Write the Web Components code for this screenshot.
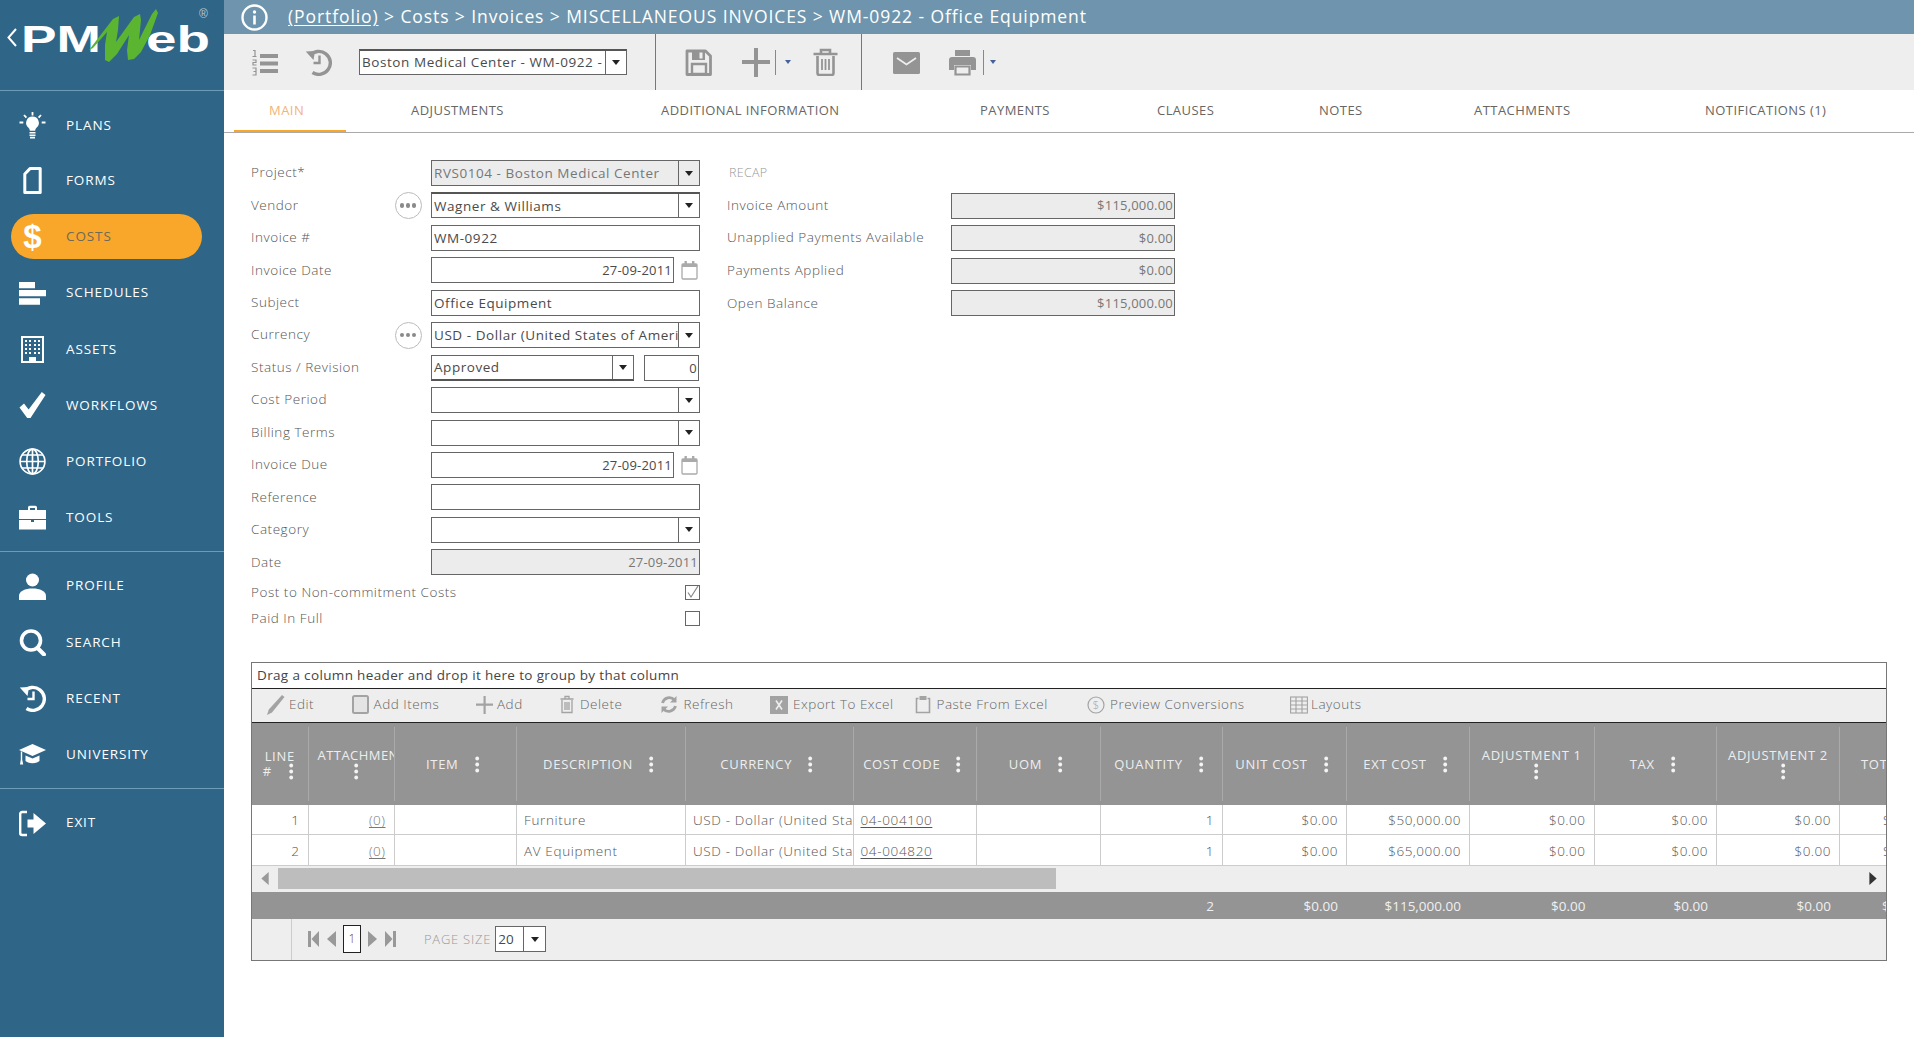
<!DOCTYPE html>
<html><head><meta charset="utf-8"><title>PMWeb</title>
<style>
html,body{margin:0;padding:0;height:100%;background:#fff;overflow:hidden}
body{font-family:"Open Sans","Liberation Sans",sans-serif;color:#555}
</style></head><body>
<pm-app></pm-app>
<script>
const FONT='"Open Sans","Liberation Sans",sans-serif';
const I={
bulb:'<g stroke="currentColor" stroke-width="1.8" fill="none"><path d="M13.5 0v3.5M5 3l2.4 2.6M22 3l-2.4 2.6M.5 10.5h3.8M22.7 10.5h3.8"/></g><path fill="currentColor" d="M13.5 4.5a6.3 6.3 0 0 1 4 11.2c-.9.8-1.2 1.8-1.3 3h-5.4c-.1-1.2-.4-2.2-1.3-3a6.3 6.3 0 0 1 4-11.2z"/><path fill="currentColor" d="M10.5 20h6v1.6h-6zM10.5 22.4h6V24h-6zM11 24.8h5V26.6h-5z"/>',
forms:'<path fill="none" stroke="currentColor" stroke-width="3" stroke-linejoin="round" d="M11 1.6h10.2v23.8H5.8V7z"/>',
sched:'<path fill="currentColor" d="M0 2h16v6.2H0zM0 10h27v6.2H0zM0 18.2h21v6.6H0z"/>',
asset:'<path fill="none" stroke="currentColor" stroke-width="2" d="M3 1h21v25H3z"/><path fill="currentColor" d="M6 4h2v2H6zM10 4h2v2h-2zM15 4h2v2h-2zM19 4h2v2h-2zM6 8h2v2H6zM10 8h2v2h-2zM15 8h2v2h-2zM19 8h2v2h-2zM6 12h2v2H6zM10 12h2v2h-2zM15 12h2v2h-2zM19 12h2v2h-2zM6 16h2v2H6zM10 16h2v2h-2zM15 16h2v2h-2zM19 16h2v2h-2zM10 21h7v5h-7z"/>',
check:'<path fill="currentColor" d="M.5 15.5 5 11.5l4.6 6L22.8 0 26.5 3 11.5 26H8.2z"/>',
globe:'<g fill="none" stroke="currentColor" stroke-width="1.7"><circle cx="13.5" cy="13.5" r="12.4"/><ellipse cx="13.5" cy="13.5" rx="5.8" ry="12.4"/><path d="M13.5 1v25M1.2 13.5h24.6M3 7h21M3 20h21"/></g>',
tools:'<path fill="currentColor" d="M9 3.5c0-1 .8-1.7 1.700-1.700h5.600c.9 0 1.700.7 1.700 1.700V6h-2V4h-5v2H9zM0 6h27v9H0zM0 16h12v2h3v-2h12v9.500H0z"/>',
person:'<circle cx="13.500" cy="7" r="6.500" fill="currentColor"/><path fill="currentColor" d="M0 27v-4c0-5 6-7.500 13.500-7.500S27 18 27 23v4z"/>',
search:'<circle cx="12" cy="11.500" r="9.500" fill="none" stroke="currentColor" stroke-width="3.600"/><path stroke="currentColor" stroke-width="4" stroke-linecap="round" d="M18.500 19l6.500 6.500"/>',
recent:'<path fill="none" stroke="currentColor" stroke-width="3.400" d="M5 6.500A11.500 11.500 0 1 1 7.500 23.500"/><path fill="currentColor" d="M.8 2.500 10 2l-1.500 9z"/><path fill="none" stroke="currentColor" stroke-width="2.400" d="M14.500 6.500v7.500H8.500"/>',
univ:'<path fill="currentColor" d="M13.500 3 27 9 13.500 15 0 9z"/><path fill="currentColor" d="M6.500 14.500v5.500c4 3 10 3 14 0v-5.500l-7 3zM1.800 10.500h1.400v8l1 5H1l.8-5z"/>',
exit:'<path fill="none" stroke="currentColor" stroke-width="2.400" d="M8 2H3.200C2 2 1.200 2.800 1.200 4v19c0 1.200.8 2 2 2H8"/><path fill="currentColor" d="M8.500 9.500h6V3L27 13.500 14.500 24v-6.500h-6z"/>',
list:'<path fill="currentColor" d="M10 5h18v4H10zM10 12.500h18v4H10zM10 20h18v4H10z"/><path fill="none" stroke="currentColor" stroke-width="1.200" d="M3 1.500h2v6M2.500 7.500h4M2.500 11h3.500v2.500H3v2.500h3.500M2.500 19h3.500v7h-3.500M3.500 22.500h2.500"/>',
save:'<path fill="none" stroke="currentColor" stroke-width="2.800" stroke-linejoin="round" d="M2 2h18.500L25.500 7v18.500H2z"/><path fill="none" stroke="currentColor" stroke-width="2.400" d="M7 15h14v10H7z"/><path fill="currentColor" d="M7 2h13v9H7z"/><path fill="#eee" d="M14.500 3.500h3v6h-3z"/>',
plus:'<path fill="currentColor" d="M12 0h4v12h12v4H16v13h-4V16H0v-4h12z"/>',
trash:'<g fill="none" stroke="currentColor" stroke-width="2.600"><path d="M4.500 8v17a2 2 0 0 0 2 2h12a2 2 0 0 0 2-2V8M.5 6h24M8 5.500V2h9v3.500"/><path stroke-width="1.800" d="M9 11v11M12.500 11v11M16 11v11"/></g>',
mail:'<rect y="3" width="27" height="22" rx="1.500" fill="currentColor"/><path fill="none" stroke="#eee" stroke-width="1.800" d="M4 9l9.500 6.500L23 9"/>',
print:'<path fill="currentColor" d="M6 1h15v6H6zM3 8h21a3 3 0 0 1 3 3v10h-5v-5H5v5H0V11a3 3 0 0 1 3-3z"/><path fill="none" stroke="currentColor" stroke-width="2.200" d="M6.500 17.500h14v8h-14z"/>',
cal:'<g fill="none" stroke="currentColor" stroke-width="1.300"><rect x="1" y="4" width="15" height="15" rx="1"/></g><path fill="currentColor" d="M1 4h15v3H1zM3.500 1h2.400v4H3.500zM11 1h2.400v4H11z"/>',
edit:'<path fill="currentColor" d="M16 1l2.500 2L6 18.500 1 21l1.800-5.500z"/>',
box:'<rect x="1" y="1" width="15" height="17" rx="1.500" fill="#e4e4e4" stroke="currentColor" stroke-width="2"/>',
gplus:'<path fill="currentColor" d="M7.500 0h2.200v7.500H17v2.200H9.700V18H7.500V9.700H0V7.500h7.500z"/>',
gtrash:'<g fill="none" stroke="currentColor" stroke-width="1.300"><path d="M3 5v12.500h10V5M1.500 4h13M6 3.500V1.500h4v2"/><path d="M6 7v8M8 7v8M10 7v8"/></g>',
refresh:'<g fill="none" stroke="currentColor" stroke-width="2.800"><path d="M2.500 8a7 7 0 0 1 12-3"/><path d="M15.500 11a7 7 0 0 1-12 3"/></g><path fill="currentColor" d="M16.500 1v6.500h-6.500zM1.500 18v-6.500h6.500z"/>',
excel:'<path fill="currentColor" d="M0 0h18v18H0z"/><path stroke="#eee" stroke-width="1.600" d="M6 4.500l6 9M12 4.500l-6 9"/>',
clip:'<path fill="none" stroke="currentColor" stroke-width="1.600" d="M3.500 3.500H1.500v14h13v-14h-2"/><path fill="currentColor" d="M4.500 1h7v4h-7z"/>',
dollar:'<circle cx="9" cy="9" r="8" fill="none" stroke="currentColor" stroke-width="1.200"/>',
layout:'<g fill="none" stroke="currentColor" stroke-width="1.100"><rect x=".6" y="1" width="16.800" height="16"/><path d="M.6 5h16.800M.6 9h16.800M.6 13h16.800M6 1v16M12 1v16"/></g>',
first:'<path fill="currentColor" d="M0 0h3v16H0zM11 0v16L3.500 8z"/>',
prev:'<path fill="currentColor" d="M9 0v16L0 8z"/>',
next:'<path fill="currentColor" d="M0 0v16l9-8z"/>',
last:'<path fill="currentColor" d="M0 0l7.500 8L0 16zM8 0h3v16H8z"/>',
dots:'<g fill="currentColor"><circle cx="2.200" cy="2.500" r="1.900"/><circle cx="2.200" cy="8.500" r="1.900"/><circle cx="2.200" cy="14.500" r="1.900"/></g>'
};
function svg(n,w,h,vb){return `<svg width="${w}" height="${h}" viewBox="${vb||`0 0 ${w} ${h}`}" style="display:block;flex:none" aria-hidden="true">${I[n]}</svg>`}
class Base extends HTMLElement{
  constructor(){super();this.attachShadow({mode:'open'})}
  connectedCallback(){this.shadowRoot.innerHTML='<style>:host{box-sizing:border-box}*{box-sizing:border-box}</style>'+this.render()}
  a(n,d=''){return this.hasAttribute(n)?this.getAttribute(n):d}
}

class PmNav extends Base{render(){const on=this.hasAttribute('active');
return `<style>:host{display:block;height:${this.a('h','56.2')}px;padding:${this.hasAttribute('h')?'4.8':'5.6'}px 22px 0 11px}
.p{height:45px;border-radius:23px;display:flex;align-items:center;padding-left:8px;gap:20px;color:#fff;font:500 13.5px/1 ${FONT};letter-spacing:.9px;${on?'background:#f9a72b;':''}}
.i{width:27px;height:27px;display:flex;align-items:center;justify-content:center;font:700 33px/1 "Liberation Sans",sans-serif;letter-spacing:0}
.t{${on?'color:#6d6a58;':''}}</style>
<div class="p"><span class="i"><slot name="icon"></slot></span><span class="t"><slot></slot></span></div>`}}
class PmIcon extends Base{render(){const n=this.a('name'),w=+this.a('w',27),h=+this.a('h',27);
return `<style>:host{display:block;flex:none;color:${this.a('color','inherit')}}</style>${svg(n,w,h,this.a('vb','0 0 27 27'))}`}}

class PmLogo extends Base{render(){return `<style>:host{display:block;height:90px}svg{display:block}</style>
<svg width="224" height="90" viewBox="0 0 224 90">
<path d="M16 29 8.500 37.500l7.500 8.500" fill="none" stroke="#fff" stroke-width="2"/>
<text x="21" y="52" font-family="Liberation Sans" font-weight="700" font-size="36" fill="#fff" textLength="80" lengthAdjust="spacingAndGlyphs">PM</text>
<text x="146" y="52" font-family="Liberation Sans" font-weight="700" font-size="36" fill="#fff" textLength="64" lengthAdjust="spacingAndGlyphs">eb</text>
<text x="199" y="18" font-family="Liberation Sans" font-size="12" fill="#b9c9d4">®</text>
<path fill="#5cb531" d="M89 50L113 19L119 16L118 30L116 42L134 17L140 14L141 20L139 40L152 14L156 9L158 13L150 35L141 52L134 59L128 60L127 50L129 35L117 54L109 62L105 60L105 45L107 32L93 48z"/>
</svg>`}}

class PmSidebar extends Base{render(){return `<style>:host{display:block;width:224px;flex:none;background:#2f6587;height:100%}
.s{height:1px;background:#6e9bb8}.g1{height:460px;padding-top:7px}.g2{padding-top:6px;height:236px}.g3{padding-top:6px}
</style><pm-logo></pm-logo><div class="s"></div><div class="g1"><slot name="a"></slot></div><div class="s"></div><div class="g2"><slot name="b"></slot></div><div class="s"></div><div class="g3"><slot name="c"></slot></div>`}}

class PmTop extends Base{render(){return `<style>:host{display:flex;align-items:center;height:34px;background:#6e95ad;color:#fff;padding-left:17px;gap:20px;font:400 17.5px/1 ${FONT};letter-spacing:.91px;white-space:nowrap}
u{text-underline-offset:2px}svg{display:block}</style>
<svg width="27" height="27" viewBox="0 0 27 27"><circle cx="13.500" cy="13.500" r="12" fill="none" stroke="#fff" stroke-width="2.400"/><circle cx="13.500" cy="8" r="1.700" fill="#fff"/><path d="M12.200 11.500h2.600v9h-2.600z" fill="#fff"/></svg>
<span><u>(Portfolio)</u> &gt; Costs &gt; Invoices &gt; MISCELLANEOUS INVOICES &gt; WM-0922 - Office Equipment</span>`}}

class PmSelect extends Base{render(){const d=this.hasAttribute('disabled');const aw=this.a('aw','21');
return `<style>:host{display:block;height:26px;width:100%}
.b{height:100%;display:flex;border:1px solid #666;${this.hasAttribute('heavy')?'border-top:2px solid #555;':''}${this.hasAttribute('heavyb')?'border-bottom:2px solid #555;':''}background:${d?'#ececec':'#fff'};font:400 ${this.a('fs','13.5')}px/1 ${FONT};color:${d?'#777':'#4a4a4a'};letter-spacing:${this.a('ls','.55px')}}
.v{flex:1;min-width:0;overflow:hidden;white-space:nowrap;padding:1px 0 0 2px;display:flex;align-items:center}
.a{width:${aw}px;flex:none;border-left:1px solid #666;display:flex;align-items:center;justify-content:center}
.a i{width:0;height:0;border:4px solid transparent;border-top:5px solid #222;border-bottom:0;display:block}</style>
<div class="b"><span class="v"><slot></slot></span><span class="a"><i></i></span></div>`}}
class PmInput extends Base{render(){const d=this.hasAttribute('disabled'),r=this.hasAttribute('right');
return `<style>:host{display:block;height:26px;width:100%;flex:1 1 auto;min-width:0}
.b{height:100%;border:1px solid #666;background:${d?'#ececec':'#fff'};color:${d?'#777':'#4a4a4a'};font:400 ${r?'13px':'13.5px'}/1 ${FONT};letter-spacing:${r?'.2px':'.55px'};display:flex;align-items:center;justify-content:${r?'flex-end':'flex-start'};padding:${d?0:1}px ${r?'1px':'2px'} 0;white-space:nowrap;overflow:hidden}</style><div class="b"><slot></slot></div>`}}
class PmField extends Base{render(){const h=this.a('h','32.45');
return `<style>:host{display:grid;grid-template-columns:143.500px 27px 9.500px 269px;align-items:center;height:${h}px}
.l{font:300 13.5px/1 ${FONT};color:#555;letter-spacing:.54px;white-space:nowrap}
.m{width:27px;height:27px;border:1.500px solid #bbb;border-radius:50%;display:flex;align-items:center;justify-content:center;gap:1.500px;grid-column:2}
.m i{width:4.500px;height:4.500px;border-radius:50%;background:#8a8a8a}
.c{grid-column:4;display:flex;align-items:center;min-width:0}</style><span class="l" style="${this.hasAttribute('wide')?'grid-column:1/3':''}">${this.a('label')}</span>${this.hasAttribute('more')?'<span class="m"><i></i><i></i><i></i></span>':''}<div class="c"><slot></slot></div>`}}
class PmDate extends Base{render(){return `<style>:host{display:flex;align-items:center;width:100%}.w{width:243px;flex:none}.i{margin-left:7px;color:#aaa}</style>
<pm-input class="w" right>${this.a('value')}</pm-input><span class="i">${svg('cal',17,20)}</span>`}}
class PmCheck extends Base{render(){return `<style>:host{display:flex;justify-content:flex-end;width:100%}b{width:15px;height:15px;border:1px solid #666;display:block}svg{display:block}</style><b>${this.hasAttribute('checked')?'<svg width="13" height="13" viewBox="0 0 13 13"><path d="M2 6.500l3 4.500 7-11" fill="none" stroke="#888" stroke-width="1.200"/></svg>':''}</b>`}}
class PmRecap extends Base{render(){return `<style>:host{display:grid;grid-template-columns:224px 224px;align-items:center;height:32.6px}
.l{font:300 13.5px/1 ${FONT};color:#555;letter-spacing:.54px;white-space:nowrap}</style><span class="l">${this.a('label')}</span><pm-input disabled right>${this.a('value')}</pm-input>`}}

class PmTabs extends Base{render(){
const t=[['ADJUSTMENTS',250],['ADDITIONAL INFORMATION',319],['PAYMENTS',177],['CLAUSES',162],['NOTES',155],['ATTACHMENTS',231],['NOTIFICATIONS (1)',180]];
return `<style>:host{display:block;height:43px;border-bottom:1px solid #aaa;padding-left:10px}
.r{display:flex;height:42px;font:400 13px/1 ${FONT};letter-spacing:.45px;color:#666;white-space:nowrap}
.t{display:flex;align-items:center;flex:none;padding-bottom:1px}.m{color:#f4b27a;width:112px;padding-left:35px;border-bottom:2.500px solid #f9a72b;padding-top:1px;padding-bottom:0;margin-right:65px}</style>
<div class="r"><span class="t m">MAIN</span>${t.map(([x,w])=>`<span class="t" style="width:${w}px">${x}</span>`).join('')}</div>`}}

class PmTool extends Base{render(){return `<style>:host{display:flex;align-items:center;flex:none;gap:${this.a('gap','5')}px;width:${this.a('w','auto')}${this.hasAttribute('w')?'px':''};color:#999;font:300 13.5px/1 ${FONT};letter-spacing:.5px;white-space:nowrap;margin-top:-1px}.t{color:#666}</style>
<span style="display:flex;color:#a3a3a3"><slot name="i"></slot></span><span class="t"><slot></slot></span>`}}

class PmToolbar extends Base{render(){const sp=w=>`<span style="width:${w}px;flex:none"></span>`;return `<style>:host{display:flex;align-items:center;height:56px;background:#eeeeee;padding-left:26px;color:#949494}
.d{width:1px;height:56px;background:#777;flex:none}.s{width:1px;height:25px;background:#888;flex:none}
.tri{width:0;height:0;border:3.500px solid transparent;border-top:4.500px solid #44619c;border-bottom:0;flex:none}
pm-select{width:268px;flex:none;margin-left:27px;margin-right:28px}</style>
${svg('list',28,27)}${sp(27)}${svg('recent',27,27)}
<pm-select ls=".57px" heavy>Boston Medical Center - WM-0922 -</pm-select>
<span class="d"></span>${sp(29)}${svg('save',27,27)}${sp(30)}${svg('plus',28,29)}${sp(5)}<span class="s"></span>${sp(8.5)}<span class="tri"></span>${sp(22.5)}${svg('trash',25,28)}${sp(23)}<span class="d"></span>${sp(30.5)}${svg('mail',27,27)}${sp(29)}${svg('print',27,27)}${sp(7)}<span class="s"></span>${sp(6.5)}<span class="tri"></span>`}}

const COLS=[55.5,86,122.5,169,167.5,123.5,124,122,124,123,124.5,122.5,123,47.5];
const TPL=COLS.map(c=>c+'px').join(' ');
const HEAD=[['LINE #','line'],['ATTACHMENTS','below'],['ITEM'],['DESCRIPTION'],['CURRENCY'],['COST CODE'],['UOM'],['QUANTITY'],['UNIT COST'],['EXT COST'],['ADJUSTMENT 1','below'],['TAX'],['ADJUSTMENT 2','below'],['TOTAL','clip']];
const ROWS=[['1','(0)','','Furniture','USD - Dollar (United States of America)','04-004100','','1','$0.00','$50,000.00','$0.00','$0.00','$0.00','$50,000.00'],
['2','(0)','','AV Equipment','USD - Dollar (United States of America)','04-004820','','1','$0.00','$65,000.00','$0.00','$0.00','$0.00','$65,000.00']];
const ALIGN=['r','r','l','l','l','l','l','r','r','r','r','r','r','r'];
class PmGrid extends Base{render(){
const dots=svg('dots',5,17);
const head=HEAD.map(([t,k],i)=>{
 if(k==='line')return `<div class="h c2"><span>LINE</span><span class="ln"><span>#</span>${dots}</span></div>`;
 if(k==='below')return `<div class="h c2 ${i==1?'cl':'ad'}"><span class="nw">${t}</span>${dots}</div>`;
 if(k==='clip')return `<div class="h st"><span class="nw">${t}</span></div>`;
 return `<div class="h sg"><span class="nw">${t}</span>${dots}</div>`;}).join('');
const rows=ROWS.map(r=>`<div class="row d">${r.map((v,i)=>{
 let inner=v; if(i==1)inner=`<u class="ul">${v}</u>`; if(i==5)inner=`<u>${v}</u>`;
 return `<div class="td ${ALIGN[i]} ${i==13?'ovl':''}"><span>${inner}</span></div>`}).join('')}</div>`).join('');
const foot=['','','','','','','','2','$0.00','$115,000.00','$0.00','$0.00','$0.00','$115,000.00'].map((v,i)=>`<div class="td r ${i==13?'ovl':''}"><span>${v}</span></div>`).join('');
return `<style>:host{display:block;border:1px solid #777;width:1636px;font:300 13.5px/1 ${FONT};color:#555;letter-spacing:.5px;overflow:hidden}
.grp{height:26px;display:flex;align-items:center;padding:1.500px 0 0 5px;border-bottom:1px solid #222;color:#444;font-weight:400;letter-spacing:.35px;background:#fff}
.tb{height:34px;display:flex;align-items:center;background:#eee;border-bottom:1px solid #222;padding-left:14px}
.row{display:grid;grid-template-columns:${TPL};white-space:nowrap}
.head{height:82px;background:#949494;color:#eee;font-weight:500;font-size:13px;letter-spacing:.7px}
.h{display:flex;align-items:center;justify-content:center;gap:15px;border-left:1px solid #aaa;margin:4px 0;overflow:hidden;padding:2px 2px 0;min-width:0}
.sg{gap:16px;padding-right:7px}
.h:first-child{border-left:0}.h svg{color:#f4f4f4}
.c2{flex-direction:column;gap:1px;align-items:center}.c2 span{display:block}.cl{align-items:flex-start;padding-left:9px}.cl svg{margin-left:36px}.cl .nw{letter-spacing:.45px}.ad svg{margin-left:10px}
.ln{display:flex!important;gap:17px;align-items:center;margin-left:-3px;margin-top:-1px}
.st{justify-content:flex-start;padding-left:21px}
.d{height:30.500px;background:#fff}
.td{display:flex;align-items:center;padding:3px 8px 0;border-left:1px solid #ccc;border-bottom:1px solid #ccc;overflow:hidden;min-width:0}
.td:first-child{border-left:0}
.td.r{justify-content:flex-end}.td.l{padding-left:7px;padding-right:0;letter-spacing:.65px}
.ovl{justify-content:flex-start!important;padding-left:43px!important;padding-right:0!important}
.d u{text-underline-offset:2px}.ul{color:#777}
.sb{height:26px;background:#eee;display:flex;align-items:center;padding:0 9px}
.tl{width:17px;color:#999}.th{height:21px;width:778px;background:#bdbdbd}
.sp{flex:1}
.ft{height:27px;background:#949494;color:#f0f0f0;font-weight:500;letter-spacing:0}
.ft .td{border:0;padding-top:2px}
.pg{height:41px;background:#eee;display:flex;align-items:center}
.pc{width:40px;height:100%;border-right:1px solid #ccc;flex:none}
.pn{display:flex;align-items:center;color:#999}
.pi{width:18px;height:28px;border:1px solid #222;background:#fff;margin:0 7px;display:flex;align-items:center;justify-content:center;color:#7a3a3a;font-size:12px;letter-spacing:0}
.ps{color:#999;margin-left:28px;font-size:13px;letter-spacing:.75px;margin-right:4px}
pm-select{width:51px;flex:none}
</style>
<div class="grp">Drag a column header and drop it here to group by that column</div>
<div class="tb">
<pm-tool w="85.6" gap="4"><span slot="i">${svg('edit',19,21)}</span>Edit</pm-tool>
<pm-tool w="124.4"><span slot="i">${svg('box',17,19)}</span>Add Items</pm-tool>
<pm-tool w="83" gap="4"><span slot="i">${svg('gplus',17,18)}</span>Add</pm-tool>
<pm-tool w="101.5"><span slot="i">${svg('gtrash',16,19)}</span>Delete</pm-tool>
<pm-tool w="109.5"><span slot="i">${svg('refresh',18,19)}</span>Refresh</pm-tool>
<pm-tool w="145.500"><span slot="i">${svg('excel',18,18)}</span>Export To Excel</pm-tool>
<pm-tool w="171.500"><span slot="i">${svg('clip',16,19)}</span>Paste From Excel</pm-tool>
<pm-tool w="203"><span slot="i"><span style="position:relative;display:block;width:18px;height:18px">${svg('dollar',18,18)}<span style="position:absolute;left:0;top:0;width:18px;text-align:center;font-size:11px;line-height:18px;letter-spacing:0">$</span></span></span>Preview Conversions</pm-tool>
<pm-tool gap="3"><span slot="i">${svg('layout',18,18)}</span>Layouts</pm-tool>
</div>
<div class="row head">${head}</div>
${rows}
<div class="sb"><span class="tl">${svg('prev',8,13,'0 0 9 16')}</span><span class="th"></span><span class="sp"></span><span style="color:#333">${svg('next',8,13,'0 0 9 16')}</span></div>
<div class="row ft">${foot}</div>
<div class="pg"><span class="pc"></span><span class="pn" style="margin-left:16px">${svg('first',11,16)}<span style="width:8px"></span>${svg('prev',9,16)}<span class="pi">1</span>${svg('next',9,16)}<span style="width:8px"></span>${svg('last',11,16)}</span>
<span class="ps">PAGE SIZE</span><pm-select aw="22" ls="0">20</pm-select></div>`}}

const reg={'pm-nav':PmNav,'pm-icon':PmIcon,'pm-logo':PmLogo,'pm-sidebar':PmSidebar,'pm-top':PmTop,'pm-select':PmSelect,'pm-input':PmInput,'pm-field':PmField,'pm-date':PmDate,'pm-check':PmCheck,'pm-recap':PmRecap,'pm-tabs':PmTabs,'pm-tool':PmTool,'pm-toolbar':PmToolbar,'pm-grid':PmGrid};

class PmApp extends Base{render(){
const nav=(s,n,t,a,h)=>`<pm-nav slot="${s}" ${a?'active':''} ${h?`h="${h}"`:''}>${n==='$'?'<span slot="icon">$</span>':`<pm-icon slot="icon" name="${n}"></pm-icon>`}${t}</pm-nav>`;
return `<style>:host{display:flex;height:1037px;width:1914px}
main{flex:1;min-width:0;display:flex;flex-direction:column}
.ct{padding:23.800px 27px 0 27px}
.top{display:flex;height:505.200px}
.f{width:448px;flex:none}.r{margin-left:28px}
.rl{height:32.450px;display:flex;align-items:center;padding-left:2px;font:300 12.500px/1 ${FONT};color:#999;letter-spacing:.3px}
.chk{margin-top:1px}
</style>
<pm-sidebar>
${nav('a','bulb','PLANS',0,'54.6')}${nav('a','forms','FORMS')}${nav('a','$','COSTS',1)}${nav('a','sched','SCHEDULES')}${nav('a','asset','ASSETS')}${nav('a','check','WORKFLOWS')}${nav('a','globe','PORTFOLIO')}${nav('a','tools','TOOLS')}
${nav('b','person','PROFILE')}${nav('b','search','SEARCH')}${nav('b','recent','RECENT')}${nav('b','univ','UNIVERSITY')}
${nav('c','exit','EXIT')}
</pm-sidebar>
<main>
<pm-top></pm-top><pm-toolbar></pm-toolbar><pm-tabs></pm-tabs>
<div class="ct"><div class="top"><div class="f">
<pm-field label="Project*"><pm-select disabled>RVS0104 - Boston Medical Center</pm-select></pm-field>
<pm-field label="Vendor" more><pm-select heavy>Wagner &amp; Williams</pm-select></pm-field>
<pm-field label="Invoice #"><pm-input>WM-0922</pm-input></pm-field>
<pm-field label="Invoice Date"><pm-date value="27-09-2011"></pm-date></pm-field>
<pm-field label="Subject"><pm-input>Office Equipment</pm-input></pm-field>
<pm-field label="Currency" more><pm-select>USD - Dollar (United States of America)</pm-select></pm-field>
<pm-field label="Status / Revision"><pm-select heavyb style="width:203px;flex:none">Approved</pm-select><pm-input right style="width:55px;flex:none;margin-left:10px">0</pm-input></pm-field>
<pm-field label="Cost Period"><pm-select></pm-select></pm-field>
<pm-field label="Billing Terms"><pm-select></pm-select></pm-field>
<pm-field label="Invoice Due"><pm-date value="27-09-2011"></pm-date></pm-field>
<pm-field label="Reference"><pm-input></pm-input></pm-field>
<pm-field label="Category"><pm-select></pm-select></pm-field>
<pm-field label="Date"><pm-input disabled right>27-09-2011</pm-input></pm-field>
<div class="chk"><pm-field label="Post to Non-commitment Costs" wide h="26"><pm-check checked></pm-check></pm-field>
<pm-field label="Paid In Full" wide h="26"><pm-check></pm-check></pm-field></div>
</div><div class="r">
<div class="rl">RECAP</div>
<pm-recap label="Invoice Amount" value="$115,000.00"></pm-recap>
<pm-recap label="Unapplied Payments Available" value="$0.00"></pm-recap>
<pm-recap label="Payments Applied" value="$0.00"></pm-recap>
<pm-recap label="Open Balance" value="$115,000.00"></pm-recap>
</div></div>
<pm-grid></pm-grid></div>
</main>`}}
reg['pm-app']=PmApp;
for(const k in reg)customElements.define(k,reg[k]);
</script>
</body></html>
